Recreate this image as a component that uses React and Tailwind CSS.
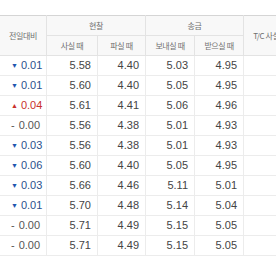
const ROWS = [
  { d: 'down', v: '0.01', a: '5.58', b: '4.40', c: '5.03', e: '4.95' },
  { d: 'down', v: '0.01', a: '5.60', b: '4.40', c: '5.05', e: '4.95' },
  { d: 'up', v: '0.04', a: '5.61', b: '4.41', c: '5.06', e: '4.96' },
  { d: 'same', v: '0.00', a: '5.56', b: '4.38', c: '5.01', e: '4.93' },
  { d: 'down', v: '0.03', a: '5.56', b: '4.38', c: '5.01', e: '4.93' },
  { d: 'down', v: '0.06', a: '5.60', b: '4.40', c: '5.05', e: '4.95' },
  { d: 'down', v: '0.03', a: '5.66', b: '4.46', c: '5.11', e: '5.01' },
  { d: 'down', v: '0.01', a: '5.70', b: '4.48', c: '5.14', e: '5.04' },
  { d: 'same', v: '0.00', a: '5.71', b: '4.49', c: '5.15', e: '5.05' },
  { d: 'same', v: '0.00', a: '5.71', b: '4.49', c: '5.15', e: '5.05' },
];

// 전일대비 표시: 상승/하락/보합
function Change({ d, v }) {
  if (d === 'up')
    return (
      <span className="text-[#c9302c]">
        <span className="text-[7px] mr-[3px] align-[1px]">▲</span>
        {v}
      </span>
    );
  if (d === 'down')
    return (
      <span className="text-[#2a4f8c]">
        <span className="text-[7px] mr-[3px] align-[1px] text-[#1f56ae]">▼</span>
        {v}
      </span>
    );
  return (
    <span className="text-[#555]">
      <span className="mr-[4px]">-</span>
      {v}
    </span>
  );
}

const KR = { fontFamily: '"Noto Sans CJK KR", sans-serif' };

export default function App() {
  const th = 'border border-[#e3e3e3] bg-[#f8f8f8] font-normal text-[#707070] text-[8px] tracking-[-0.4px] h-[20px] p-0 whitespace-nowrap';
  const td = 'border border-[#ececec] h-[20px] p-0 pr-[6px] text-right text-[#444]';
  return (
    <div className="w-[276px] h-[260px] bg-white overflow-hidden pt-[15px]" style={{ fontFamily: '"Liberation Sans", "Noto Sans CJK KR", sans-serif' }}>
      <table className="border-collapse table-fixed w-[298px] text-[11px] leading-none -ml-px">
        <colgroup>
          <col className="w-[47px]" />
          <col className="w-[51px]" />
          <col className="w-[48px]" />
          <col className="w-[49px]" />
          <col className="w-[49px]" />
          <col className="w-[54px]" />
        </colgroup>
        <thead>
          <tr>
            <th rowSpan={2} className={th + ' border-t-[#d5d5d5]'} style={KR}>전일대비</th>
            <th colSpan={2} className={th + ' border-t-[#d5d5d5]'} style={KR}>현찰</th>
            <th colSpan={2} className={th + ' border-t-[#d5d5d5]'} style={KR}>송금</th>
            <th rowSpan={2} className={th + ' border-t-[#d5d5d5]'} style={KR}>T/C 사실 때</th>
          </tr>
          <tr>
            <th className={th} style={KR}>사실 때</th>
            <th className={th} style={KR}>파실 때</th>
            <th className={th} style={KR}>보내실 때</th>
            <th className={th} style={KR}>받으실 때</th>
          </tr>
        </thead>
        <tbody>
          {ROWS.map((r, i) => (
            <tr key={i}>
              <td className="border border-[#ececec] h-[20px] p-0 pl-[11px] text-left whitespace-nowrap">
                <Change d={r.d} v={r.v} />
              </td>
              <td className={td}>{r.a}</td>
              <td className={td}>{r.b}</td>
              <td className={td}>{r.c}</td>
              <td className={td}>{r.e}</td>
              <td className={td}></td>
            </tr>
          ))}
        </tbody>
      </table>
    </div>
  );
}
